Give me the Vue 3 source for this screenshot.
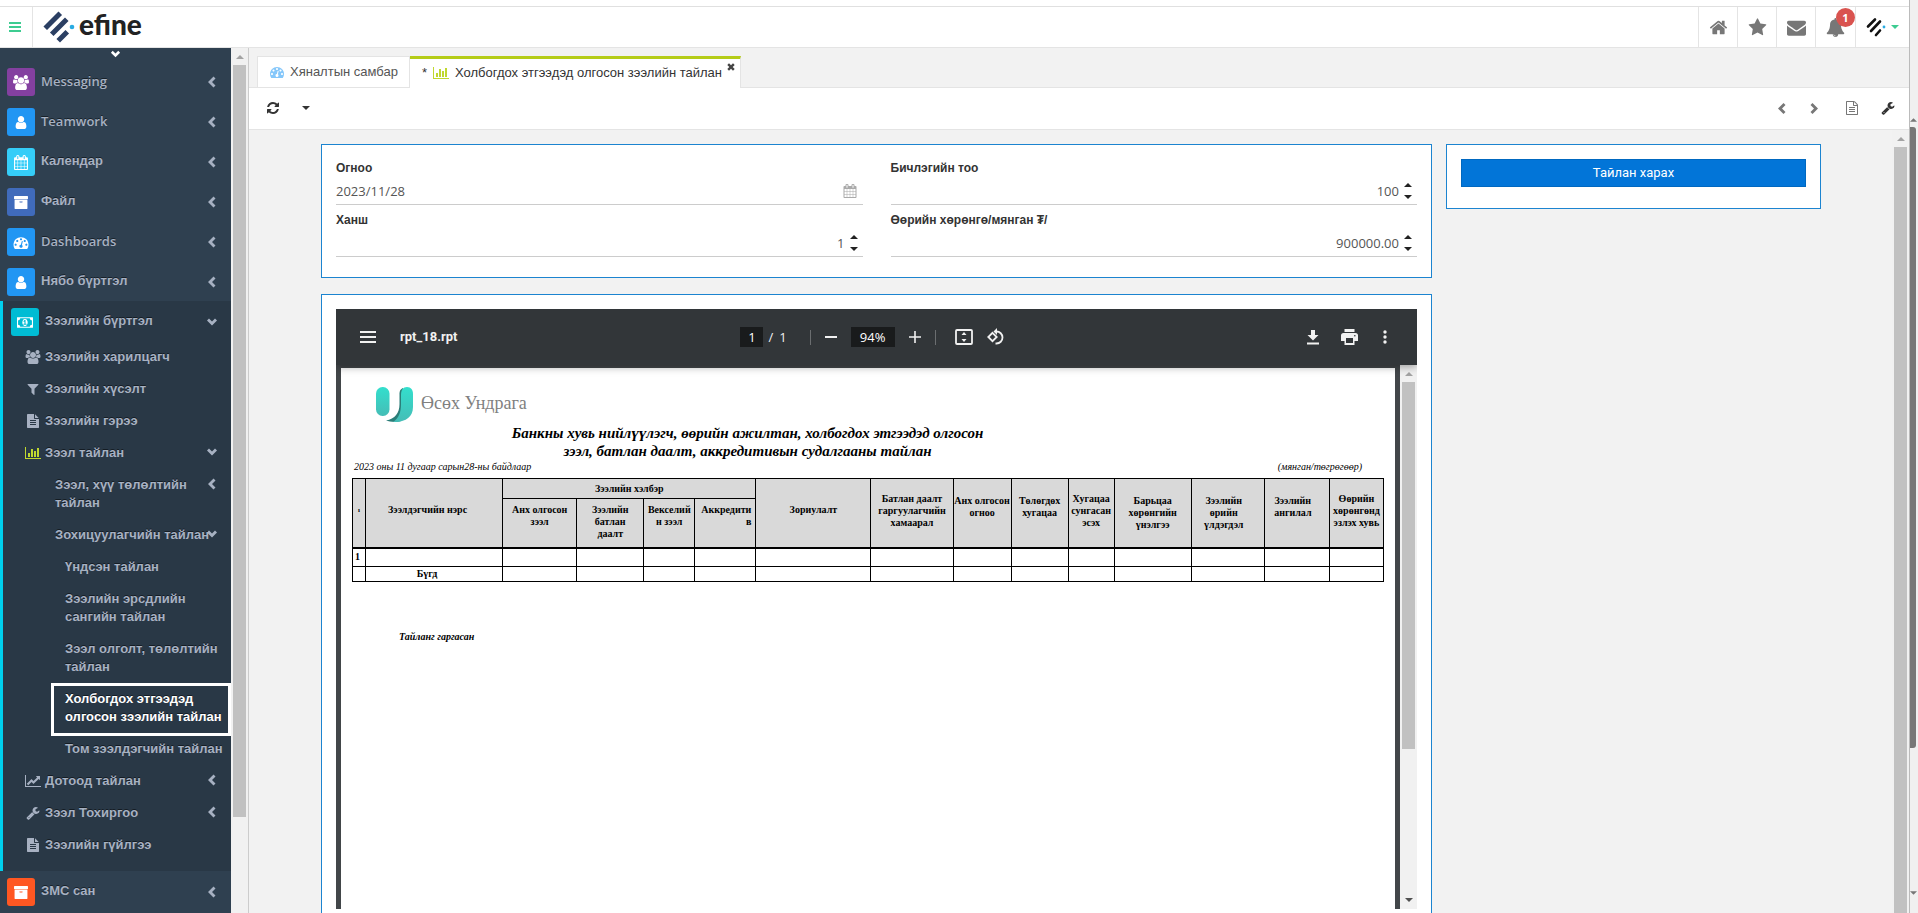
<script setup>
import { h, ref } from 'vue'

const glyphs = {
  home: ['0 0 1792 1792', 'M1472 992v480q0 26-19 45t-45 19h-384v-384h-256v384h-384q-26 0-45-19t-19-45v-480q0-1 .5-3t.5-3l575-474 575 474q1 2 1 6zm223-69l-62 74q-8 9-21 11h-3q-13 0-21-7l-692-577-692 577q-12 8-24 7-13-2-21-11l-62-74q-8-10-7-23.5t11-21.5l719-599q32-26 76-26t76 26l244 204v-195q0-14 9-23t23-9h192q14 0 23 9t9 23v408l219 182q10 8 11 21.5t-7 23.5z'],
  star: ['0 0 1792 1792', 'M1728 647q0 22-26 48l-363 354 86 500q1 7 1 20 0 21-10.5 35.5t-30.5 14.5q-19 0-40-12l-449-236-449 236q-22 12-40 12-21 0-31.5-14.5t-10.5-35.5q0-6 2-20l86-500-364-354q-25-27-25-48 0-37 56-46l502-73 225-455q19-41 49-41t49 41l225 455 502 73q56 9 56 46z'],
  mail: ['0 0 1792 1792', 'M1792 710v794q0 66-47 113t-113 47h-1472q-66 0-113-47t-47-113v-794q44 49 101 87 362 246 497 345 57 42 92.5 65.5t94.5 48 110 24.5h2q51 0 110-24.5t94.5-48 92.5-65.5q170-123 498-345 57-39 100-87zm0-294q0 79-49 151t-122 123q-376 261-468 325-10 7-42.5 31t-54 38.5-52 32.5-57.5 27-50 9h-2q-23 0-50-9t-57.5-27-52-32.5-54-38.5-42.5-31q-91-64-262-182.5t-205-142.5q-62-42-117-115.5t-55-136.5q0-78 41.5-130t118.5-52h1472q65 0 112.5 47t47.5 113z'],
  bell: ['0 0 1792 1792', 'M912 1696q0-16-16-16-59 0-101.5-42.5t-42.5-101.5q0-16-16-16t-16 16q0 73 51.5 124.5t124.5 51.5q16 0 16-16zm816-288q0 52-38 90t-90 38h-448q0 106-75 181t-181 75-181-75-75-181h-448q-52 0-90-38t-38-90q50-42 91-88t85-119.5 74.5-158.5 50-206 19.5-260q0-152 117-282.5t307-158.5q-8-19-8-39 0-40 28-68t68-28 68 28 28 68q0 20-8 39 190 28 307 158.5t117 282.5q0 139 19.5 260t50 206 74.5 158.5 85 119.5 91 88z'],
  refresh: ['0 0 1792 1792', 'M1639 1056q0 5-1 7-64 268-268 434.5t-478 166.5q-146 0-282.5-55t-243.5-157l-129 129q-19 19-45 19t-45-19-19-45v-448q0-26 19-45t45-19h448q26 0 45 19t19 45-19 45l-137 137q71 66 161 102t187 36q134 0 250-65t186-179q11-17 53-117 8-23 30-23h192q13 0 22.5 9.5t9.5 22.5zm25-800v448q0 26-19 45t-45 19h-448q-26 0-45-19t-19-45 19-45l138-138q-148-137-349-137-134 0-250 65t-186 179q-11 17-53 117-8 23-30 23h-199q-13 0-22.5-9.5t-9.5-22.5v-7q65-268 270-434.5t480-166.5q146 0 284 55.5t245 156.5l130-129q19-19 45-19t45 19 19 45z'],
  wrench: ['0 0 1792 1792', 'M448 1472q0-26-19-45t-45-19-45 19-19 45 19 45 45 19 45-19 19-45zm644-420l-682 682q-37 37-90 37-52 0-91-37l-106-108q-38-36-38-90 0-53 38-91l681-681q39 98 114.5 173.5t173.5 114.5zm634-435q0 39-23 106-47 134-164.5 217.5t-258.5 83.5q-185 0-316.5-131.5t-131.5-316.5 131.5-316.5 316.5-131.5q58 0 121.5 16.5t107.5 46.5q16 11 16 28t-16 28l-293 169v224l193 107q5-3 79-48.5t135.5-81 70.5-35.5q15 0 23.5 10t8.5 25z'],
  gauge: ['0 0 1792 1792', 'M384 1152q0-53-37.5-90.5t-90.5-37.5-90.5 37.5-37.5 90.5 37.5 90.5 90.5 37.5 90.5-37.5 37.5-90.5zm192-448q0-53-37.5-90.5t-90.5-37.5-90.5 37.5-37.5 90.5 37.5 90.5 90.5 37.5 90.5-37.5 37.5-90.5zm428 481l101-382q6-26-7.5-48.5t-38.5-29.5-48 6.5-30 39.5l-101 382q-60 5-107 43.5t-63 98.5q-20 77 20 146t117 89 146-20 89-117q16-60-6-117t-72-91zm660-33q0-53-37.5-90.5t-90.5-37.5-90.5 37.5-37.5 90.5 37.5 90.5 90.5 37.5 90.5-37.5 37.5-90.5zm-640-640q0-53-37.5-90.5t-90.5-37.5-90.5 37.5-37.5 90.5 37.5 90.5 90.5 37.5 90.5-37.5 37.5-90.5zm448 192q0-53-37.5-90.5t-90.5-37.5-90.5 37.5-37.5 90.5 37.5 90.5 90.5 37.5 90.5-37.5 37.5-90.5zm320 448q0 261-141 483-19 29-54 29h-1402q-35 0-54-29-141-221-141-483 0-182 71-348t191-286 286-191 348-71 348 71 286 191 191 286 71 348z'],
  bars: ['0 0 2048 1792', 'M640 896v512h-256v-512h256zm384-512v1024h-256v-1024h256zm1024 1152v128h-2048v-1536h128v1408h1920zm-640-896v768h-256v-768h256zm384-384v1152h-256v-1152h256z'],
  line: ['0 0 2048 1792', 'M2048 1536v128h-2048v-1536h128v1408h1920zm-128-1248v435q0 21-19.5 29.5t-35.5-7.5l-121-121-633 633q-10 10-23 10t-23-10l-233-233-416 416-192-192 585-585q10-10 23-10t23 10l233 233 464-464-121-121q-16-16-7.5-35.5t29.5-19.5h435q14 0 23 9t9 23z'],
  user: ['0 0 1792 1792', 'M1536 1399q0 109-62.5 187t-150.5 78h-854q-88 0-150.5-78t-62.5-187q0-85 8.5-160.5t31.5-152 58.5-131 94-89 134.5-34.5q131 128 313 128t313-128q76 0 134.5 34.5t94 89 58.5 131 31.5 152 8.5 160.5zm-256-887q0 159-112.5 271.5t-271.5 112.5-271.5-112.5-112.5-271.5 112.5-271.5 271.5-112.5 271.5 112.5 112.5 271.5z'],
  users: ['-64 0 1920 1792', 'M529 896q-162 5-265 128h-134q-82 0-138-40.5t-56-118.5q0-353 124-353 6 0 43.5 21t97.5 42.5 119 21.5q67 0 133-23-5 37-5 66 0 139 81 256zm1071 637q0 120-73 189.5t-194 69.5h-874q-121 0-194-69.5t-73-189.5q0-53 3.5-103.5t14-109 26.5-108.5 43-97.5 62-81 85.5-53.5 111.5-20q10 0 43 21.5t73 48 107 48 135 21.5 135-21.5 107-48 73-48 43-21.5q61 0 111.5 20t85.5 53.5 62 81 43 97.5 26.5 108.5 14 109 3.5 103.5zm-1024-1277q0 106-75 181t-181 75-181-75-75-181 75-181 181-75 181 75 75 181zm704 384q0 159-112.5 271.5t-271.5 112.5-271.5-112.5-112.5-271.5 112.5-271.5 271.5-112.5 271.5 112.5 112.5 271.5zm576 225q0 78-56 118.5t-138 40.5h-134q-103-123-265-128 81-117 81-256 0-29-5-66 66 23 133 23 59 0 119-21.5t97.5-42.5 43.5-21q124 0 124 353zm-128-609q0 106-75 181t-181 75-181-75-75-181 75-181 181-75 181 75 75 181z'],
  calendar: ['0 0 1792 1792', 'M192 1664h288v-288h-288v288zm352 0h320v-288h-320v288zm-352-352h288v-320h-288v320zm352 0h320v-320h-320v320zm-352-384h288v-288h-288v288zm736 736h320v-288h-320v288zm-384-736h320v-288h-320v288zm768 736h288v-288h-288v288zm-384-352h320v-320h-320v320zm-352-864v-288q0-13-9.5-22.5t-22.5-9.5h-64q-13 0-22.5 9.5t-9.5 22.5v288q0 13 9.5 22.5t22.5 9.5h64q13 0 22.5-9.5t9.5-22.5zm736 864h288v-320h-288v320zm-384-384h320v-288h-320v288zm384 0h288v-288h-288v288zm32-480v-288q0-13-9.5-22.5t-22.5-9.5h-64q-13 0-22.5 9.5t-9.5 22.5v288q0 13 9.5 22.5t22.5 9.5h64q13 0 22.5-9.5t9.5-22.5zm384-64v1280q0 52-38 90t-90 38h-1408q-52 0-90-38t-38-90v-1280q0-52 38-90t90-38h128v-96q0-66 47-113t113-47h64q66 0 113 47t47 113v96h384v-96q0-66 47-113t113-47h64q66 0 113 47t47 113v96h128q52 0 90 38t38 90z'],
  archive: ['0 0 1792 1792', 'M1088 832q0-26-19-45t-45-19h-256q-26 0-45 19t-19 45 19 45 45 19h256q26 0 45-19t19-45zm576-192v960q0 26-19 45t-45 19h-1408q-26 0-45-19t-19-45v-960q0-26 19-45t45-19h1408q26 0 45 19t19 45zm64-448v256q0 26-19 45t-45 19h-1536q-26 0-45-19t-19-45v-256q0-26 19-45t45-19h1536q26 0 45 19t19 45z'],
  doc: ['0 0 1792 1792', 'M1596 476q14 14 28 36h-472v-472q22 14 36 28zm-476 164h544v1056q0 40-28 68t-68 28h-1344q-40 0-68-28t-28-68v-1600q0-40 28-68t68-28h800v544q0 40 28 68t68 28zm160 736v-64q0-14-9-23t-23-9h-704q-14 0-23 9t-9 23v64q0 14 9 23t23 9h704q14 0 23-9t9-23zm0-256v-64q0-14-9-23t-23-9h-704q-14 0-23 9t-9 23v64q0 14 9 23t23 9h704q14 0 23-9t9-23zm0-256v-64q0-14-9-23t-23-9h-704q-14 0-23 9t-9 23v64q0 14 9 23t23 9h704q14 0 23-9t9-23z'],
  docOutline: ['0 0 1792 1792', 'M1596 380q28 28 48 76t20 88v1152q0 40-28 68t-68 28h-1344q-40 0-68-28t-28-68v-1600q0-40 28-68t68-28h896q40 0 88 20t76 48zm-444-244v376h376q-10-29-22-41l-313-313q-12-12-41-22zm384 1528v-1024h-416q-40 0-68-28t-28-68v-416h-768v1536h1280zm-1024-864q0-14 9-23t23-9h704q14 0 23 9t9 23v64q0 14-9 23t-23 9h-704q-14 0-23-9t-9-23v-64zm736 224q14 0 23 9t9 23v64q0 14-9 23t-23 9h-704q-14 0-23-9t-9-23v-64q0-14 9-23t23-9h704zm0 256q14 0 23 9t9 23v64q0 14-9 23t-23 9h-704q-14 0-23-9t-9-23v-64q0-14 9-23t23-9h704z'],
  filter: ['192 0 1408 1792', 'M1595 295q17 41-14 70l-493 493v742q0 42-39 59-13 5-25 5-27 0-45-19l-256-256q-19-19-19-45v-486l-493-493q-31-29-14-70 17-39 59-39h1280q42 0 59 39z'],
  money: ['0 0 1920 1792', 'M768 1152h384v-96h-128v-448h-114l-148 137 77 80q42-37 55-57h2v288h-128v96zm512-256q0 70-21 142t-59.5 134-101.5 101-138 39-138-39-101.5-101-59.5-134-21-142 21-142 59.5-134 101.5-101 138-39 138 39 101.5 101 59.5 134 21 142zm512 256v-512q-106 0-181-75t-75-181h-1152q0 106-75 181t-181 75v512q106 0 181 75t75 181h1152q0-106 75-181t181-75zm128-832v1152q0 26-19 45t-45 19h-1792q-26 0-45-19t-19-45v-1152q0-26 19-45t45-19h1792q26 0 45 19t19 45z'],
  left: ['0 0 10 12', 'M6.5 0.5L8.5 2.5 5 6 8.5 9.5 6.5 11.5 1 6z'],
  right: ['0 0 10 12', 'M3.5 0.5L1.5 2.5 5 6 1.5 9.5 3.5 11.5 9 6z'],
  down: ['0 0 12 12', 'M1 4.5L3 2.5 6 5.5 9 2.5 11 4.5 6 9.5z'],
  caret: ['0 0 8 4', 'M0 0h8l-4 4z'],
  caretUp: ['0 0 8 4', 'M0 4h8l-4-4z'],
  close: ['0 0 8 8', 'M0.3 2L2 0.3 4 2.3 6 0.3 7.7 2 5.7 4 7.7 6 6 7.7 4 5.7 2 7.7 0.3 6 2.3 4z'],
}

const Icon = (props) =>
  h('svg', { viewBox: glyphs[props.name][0], 'aria-hidden': 'true' }, [
    h('path', { d: glyphs[props.name][1], fill: 'currentColor' }),
  ])
Icon.props = ['name']

const modules = [
  { label: 'Messaging', icon: 'users', tone: 'purple', latin: true },
  { label: 'Teamwork', icon: 'user', tone: 'blue', latin: true },
  { label: 'Календар', icon: 'calendar', tone: 'sky' },
  { label: 'Файл', icon: 'archive', tone: 'indigo' },
  { label: 'Dashboards', icon: 'gauge', tone: 'blue', latin: true },
  { label: 'Нябо бүртгэл', icon: 'user', tone: 'blue' },
]

const submenu = [
  { label: 'Зээлийн харилцагч', icon: 'users', level: 1 },
  { label: 'Зээлийн хүсэлт', icon: 'filter', level: 1 },
  { label: 'Зээлийн гэрээ', icon: 'doc', level: 1 },
  { label: 'Зээл тайлан', icon: 'bars', level: 1, arrow: 'down', lime: true },
  { label: 'Зээл, хүү төлөлтийн\nтайлан', level: 2, arrow: 'left' },
  { label: 'Зохицуулагчийн тайлан', level: 2, arrow: 'down' },
  { label: 'Үндсэн тайлан', level: 3 },
  { label: 'Зээлийн эрсдлийн\nсангийн тайлан', level: 3 },
  { label: 'Зээл олголт, төлөлтийн\nтайлан', level: 3 },
  { label: 'Холбогдох этгээдэд\nолгосон зээлийн тайлан', level: 3, current: true },
  { label: 'Том зээлдэгчийн тайлан', level: 3 },
  { label: 'Дотоод тайлан', icon: 'line', level: 1, arrow: 'left' },
  { label: 'Зээл Тохиргоо', icon: 'wrench', level: 1, arrow: 'left' },
  { label: 'Зээлийн гүйлгээ', icon: 'doc', level: 1 },
]

const fields = [
  { id: 'date', label: 'Огноо', value: ref('2023/11/28'), date: true },
  { id: 'count', label: 'Бичлэгийн тоо', value: ref('100') },
  { id: 'rate', label: 'Ханш', value: ref('1') },
  { id: 'capital', label: 'Өөрийн хөрөнгө/мянган ₮/', value: ref('900000.00') },
]

const columns = [13, 137, 74, 67, 51, 61, 115, 82, 58, 57, 46, 77, 73, 65, 54]
const total = columns.reduce((sum, width) => sum + width, 0)
</script>

<template>
  <div class="shell">
    <div class="app">
      <header class="topbar">
        <button class="burger" aria-label="Цэс"><i></i><i></i><i></i></button>
        <a class="brand" href="#">
          <svg class="brand-mark" viewBox="0 0 32 32" aria-hidden="true">
            <g stroke="#2b3f63" stroke-width="5" stroke-linecap="square">
              <path d="M4 15.500L15.500 4M10.500 21.500L22 10M17 28L22.500 22.500" />
            </g>
            <circle cx="29" cy="16" r="2.300" fill="#29abe2" />
          </svg>
          <span>efine</span>
        </a>
        <nav class="quick">
          <button aria-label="Нүүр"><Icon name="home" class="q-icon" /></button>
          <button aria-label="Дуртай"><Icon name="star" class="q-icon" /></button>
          <button aria-label="Шуудан"><Icon name="mail" class="q-icon" /></button>
          <button class="bell" aria-label="Мэдэгдэл"><Icon name="bell" class="q-icon" /><span class="badge">1</span></button>
          <button class="profile" aria-label="Хэрэглэгч">
            <svg class="profile-mark" viewBox="0 0 20 20" aria-hidden="true">
              <path d="M2 9.500L9 2.500M5 14L14 4.500M10 18L14 13.500" stroke="#111" stroke-width="2.600" stroke-linecap="round" />
              <circle cx="18" cy="10" r="1.400" fill="#29abe2" />
            </svg>
            <Icon name="caret" class="profile-caret" />
          </button>
        </nav>
      </header>

      <div class="body">
        <nav class="sidebar">
          <button class="more" aria-label="Дэлгэх"><Icon name="down" class="arrow" /></button>
          <a v-for="m in modules" :key="m.label" class="module" href="#">
            <span class="tile" :class="m.tone"><Icon :name="m.icon" class="tile-icon" /></span>
            <span class="name" :class="{ latin: m.latin }">{{ m.label }}</span>
            <Icon name="left" class="arrow" />
          </a>
          <div class="open">
            <a class="module" href="#">
              <span class="tile cyan"><Icon name="money" class="tile-icon" /></span>
              <span class="name">Зээлийн бүртгэл</span>
              <Icon name="down" class="arrow" />
            </a>
            <a v-for="s in submenu" :key="s.label" class="sub" :class="['level' + s.level, { current: s.current }]" href="#">
              <Icon v-if="s.icon" :name="s.icon" class="sub-icon" :class="{ lime: s.lime }" />
              <span class="name">{{ s.label }}</span>
              <Icon v-if="s.arrow" :name="s.arrow" class="arrow" />
            </a>
          </div>
          <a class="module" href="#">
            <span class="tile orange"><Icon name="archive" class="tile-icon" /></span>
            <span class="name">ЗМС сан</span>
            <Icon name="left" class="arrow" />
          </a>
        </nav>
        <div class="rail side-rail"><Icon name="caretUp" class="rail-arrow" /><i class="side-thumb"></i></div>

        <main class="main">
          <div class="tabs">
            <a class="tab" href="#"><Icon name="gauge" class="tab-icon sky-text" />Хяналтын самбар</a>
            <a class="tab active" href="#"><span class="star">*</span><Icon name="bars" class="tab-icon wide lime" />Холбогдох этгээдэд олгосон зээлийн тайлан<Icon name="close" class="close" /></a>
          </div>
          <div class="tools">
            <button aria-label="Сэргээх"><Icon name="refresh" class="tool-icon" /></button>
            <button class="menu-tool" aria-label="Сонголт"><Icon name="caret" class="tool-caret" /></button>
            <span class="spacer"></span>
            <button class="gray" aria-label="Өмнөх"><Icon name="left" class="step" /></button>
            <button class="gray" aria-label="Дараах"><Icon name="right" class="step" /></button>
            <button class="gray doc-tool" aria-label="Баримт"><Icon name="docOutline" class="tool-icon" /></button>
            <button aria-label="Тохиргоо"><Icon name="wrench" class="tool-icon" /></button>
          </div>

          <div class="scroller">
            <div class="content">
              <div class="left-col">
                <form class="panel filters" @submit.prevent>
                  <div v-for="f in fields" :key="f.id" class="field">
                    <label :for="f.id">{{ f.label }}</label>
                    <div class="control">
                      <input :id="f.id" v-model="f.value.value" type="text" :class="{ number: !f.date }" />
                      <Icon v-if="f.date" name="calendar" class="cal" />
                      <span v-else class="spin">
                        <button type="button" aria-label="Нэмэх"><Icon name="caretUp" /></button>
                        <button type="button" aria-label="Хасах"><Icon name="caret" /></button>
                      </span>
                    </div>
                  </div>
                </form>

                <section class="panel report">
                  <div class="viewer">
                    <div class="pdf-bar">
                      <div class="pdf-left">
                        <button class="pdf-menu" aria-label="Цэс"><i></i><i></i><i></i></button>
                        <span>rpt_18.rpt</span>
                      </div>
                      <div class="pdf-mid">
                        <input class="page-no" aria-label="Хуудас" value="1" />
                        <span class="slash">/</span><span class="pages">1</span>
                        <i class="rule"></i>
                        <button aria-label="Багасгах"><svg class="sign" viewBox="0 0 12 12"><path d="M0 6h12" stroke="currentColor" stroke-width="2" /></svg></button>
                        <input class="zoom-level" aria-label="Томруулалт" value="94%" />
                        <button aria-label="Томруулах"><svg class="sign" viewBox="0 0 12 12"><path d="M0 6h12M6 0v12" stroke="currentColor" stroke-width="1.600" /></svg></button>
                        <i class="rule"></i>
                        <button class="fit" aria-label="Тааруулах"><svg viewBox="0 0 18 16"><rect x="1" y="1" width="16" height="14" rx="1" fill="none" stroke="currentColor" stroke-width="1.800" /><path d="M9 3l2.500 3h-5zM9 13l2.500-3h-5z" fill="currentColor" /></svg></button>
                        <button class="turn" aria-label="Эргүүлэх"><svg viewBox="0 0 18 18"><path d="M5.500 4.800L9.700 9l-4.200 4.200L1.300 9z" fill="none" stroke="currentColor" stroke-width="1.800" /><path d="M8 3.500h1.500a6 6 0 0 1 0 12H8.500" fill="none" stroke="currentColor" stroke-width="1.800" /><path d="M10 0v7L6.500 3.500z" fill="currentColor" /></svg></button>
                      </div>
                      <div class="pdf-right">
                        <button aria-label="Татах"><svg viewBox="0 0 12 15"><path d="M4 0h4v5h3.500L6 10.500.500 5H4zM0 12.500h12v2H0z" fill="currentColor" /></svg></button>
                        <button class="print" aria-label="Хэвлэх"><svg viewBox="0 0 17 16"><path d="M3.500 0h10v3h-10zM2.500 4h12A2.500 2.500 0 0 1 17 6.500V12h-3.500v4h-10v-4H0V6.500A2.500 2.500 0 0 1 2.500 4zM5 9v5h7V9zM13.800 6a.8.8 0 1 0 .1 1.600.8.8 0 0 0-.1-1.600z" fill="currentColor" fill-rule="evenodd" /></svg></button>
                        <button class="dots" aria-label="Бусад"><svg viewBox="0 0 4 14"><circle cx="2" cy="2" r="1.700" fill="currentColor" /><circle cx="2" cy="7" r="1.700" fill="currentColor" /><circle cx="2" cy="12" r="1.700" fill="currentColor" /></svg></button>
                      </div>
                    </div>
                    <div class="pdf-body">
                      <article class="page">
                        <div class="org">
                          <svg class="org-mark" viewBox="0 0 37 35" aria-hidden="true">
                            <defs>
                              <linearGradient id="teal" x1="0" y1="0" x2="0" y2="1">
                                <stop offset="0" stop-color="#33dfcd" /><stop offset="1" stop-color="#45bdb6" />
                              </linearGradient>
                            </defs>
                            <rect width="13.500" height="29" rx="6.500" fill="url(#teal)" />
                            <path d="M27 1C24 2.500 23.500 4 23.500 8V17C23.500 26 19 32 10 33.500 14 35 20 35.500 25 34z" fill="#2b7d78" />
                            <path d="M25 8C25 3 27 0 31 0s6 3 6 7v13C37 31 28 35.500 17 35 23 31 25 25 25 17z" fill="url(#teal)" />
                          </svg>
                          <span>Өсөх Ундрага</span>
                        </div>
                        <h1>Банкны хувь нийлүүлэгч, өөрийн ажилтан, холбогдох этгээдэд олгосон<br />зээл, батлан даалт, аккредитивын судалгааны тайлан</h1>
                        <div class="meta">
                          <span>2023 оны 11 дугаар сарын28-ны байдлаар</span>
                          <span>(мянган/төгрөгөөр)</span>
                        </div>
                        <table>
                          <colgroup>
                            <col v-for="(w, i) in columns" :key="i" :style="{ width: (w / total) * 100 + '%' }" />
                          </colgroup>
                          <thead>
                            <tr class="group">
                              <th rowspan="2" class="single tiny">ı</th>
                              <th rowspan="2" class="single client">Зээлдэгчийн нэрс</th>
                              <th colspan="4" class="center">Зээлийн хэлбэр</th>
                              <th rowspan="2" class="single">Зориулалт</th>
                              <th rowspan="2" class="high">Батлан даалт<br />гаргуулагчийн<br />хамаарал</th>
                              <th rowspan="2">Анх олгосон<br />огноо</th>
                              <th rowspan="2">Төлөгдөх<br />хугацаа</th>
                              <th rowspan="2" class="high">Хугацаа<br />сунгасан<br />эсэх</th>
                              <th rowspan="2">Барьцаа<br />хөрөнгийн<br />үнэлгээ</th>
                              <th rowspan="2" class="inset">Зээлийн<br />өрийн<br />үлдэгдэл</th>
                              <th rowspan="2" class="inset">Зээлийн<br />ангилал</th>
                              <th rowspan="2" class="high">Өөрийн<br />хөрөнгөнд<br />эзлэх хувь</th>
                            </tr>
                            <tr class="kinds">
                              <th>Анх олгосон<br />зээл</th>
                              <th>Зээлийн<br />батлан<br />даалт</th>
                              <th>Векселий<br />н зээл</th>
                              <th class="end">Аккредити<br />в</th>
                            </tr>
                          </thead>
                          <tbody>
                            <tr class="entry"><td>1</td><td v-for="n in 14" :key="n"></td></tr>
                            <tr class="sum"><td></td><td>Бүгд</td><td v-for="n in 13" :key="n"></td></tr>
                          </tbody>
                        </table>
                        <p class="signed">Тайланг гаргасан</p>
                      </article>
                      <div class="rail pdf-rail"><Icon name="caretUp" class="rail-arrow" /><i class="pdf-thumb"></i><Icon name="caret" class="rail-arrow dark" /></div>
                    </div>
                  </div>
                </section>
              </div>

              <section class="panel action"><button class="run">Тайлан харах</button></section>
            </div>
            <div class="rail"><Icon name="caretUp" class="rail-arrow" /><i class="main-thumb"></i></div>
          </div>
        </main>
      </div>
    </div>
    <div class="edge"><Icon name="caretUp" class="edge-arrow" /><i></i><Icon name="caret" class="edge-arrow" /></div>
  </div>
</template>

<style>
body { margin: 0; overflow: hidden; }
</style>

<style scoped>
* { box-sizing: border-box; }
button { padding: 0; border: 0; background: none; color: inherit; font: inherit; cursor: pointer; }
a { color: inherit; text-decoration: none; }
svg { display: block; flex: none; }
.shell { display: flex; height: 100vh; overflow: hidden; background: #fff; font-family: "Open Sans", "Noto Sans", sans-serif; font-size: 13px; color: #333; }
.app { flex: 1; min-width: 0; display: flex; flex-direction: column; }

/* Top bar */
.topbar { flex: none; display: flex; height: 42px; margin-top: 6px; border-top: 1px solid #e0e0e0; border-bottom: 1px solid #e4e4e4; }
.burger { width: 33px; padding: 0 0 0 9px; border-right: 1px solid #e4e4e4; display: flex; flex-direction: column; justify-content: center; gap: 2px; }
.burger i { width: 12px; height: 2px; background: #3dcc91; }
.brand { display: flex; align-items: center; gap: 4px; padding-left: 10px; font: 900 28px/34px Lato, sans-serif; color: #222; }
.brand span { padding-bottom: 6px; }
.brand-mark { width: 32px; height: 32px; }
.quick { display: flex; margin-left: auto; color: #777; }
.quick button { width: 39px; display: flex; align-items: center; justify-content: center; border-left: 1px solid #e4e4e4; }
.q-icon { width: 19px; height: 19px; }
.quick .bell { position: relative; width: 40px; }
.badge { position: absolute; top: 1px; left: 20px; width: 19px; height: 19px; border-radius: 10px; background: #d9534f; color: #fff; font: 700 11px/19px "Open Sans", sans-serif; text-align: center; }
.quick .profile { width: 54px; gap: 5px; }
.profile-mark { width: 20px; height: 20px; }
.profile-caret { width: 8px; height: 4px; color: #3dcc91; }

/* Sidebar */
.body { flex: 1; min-height: 0; display: flex; }
.sidebar { flex: none; width: 231px; overflow: hidden; background: #2f4050; color: #a7b1c2; font: 700 13px/18px "Liberation Sans", Arial, sans-serif; text-shadow: 0 -1px 0 rgba(0, 0, 0, 0.5); }
.more { display: flex; width: 100%; height: 13px; justify-content: center; color: #fff; }
.module { display: flex; align-items: center; height: 40px; padding: 2px 14px 0 7px; }
.module .name { padding-bottom: 2px; }
.module .arrow { margin-bottom: 1px; }
.tile { width: 28px; height: 28px; margin-right: 6px; border-radius: 3px; display: flex; align-items: center; justify-content: center; color: #fff; }
.tile-icon { width: 16px; height: 15px; }
.purple { background: #8440a0; }
.blue { background: #2196f3; }
.sky { background: #35cdf8; }
.indigo { background: #406bbb; }
.cyan { background: #00bcd4; }
.orange { background: #ff5722; }
.name { flex: 1; min-width: 0; white-space: pre; }
.name.latin { font: 600 13px/18px "Open Sans", sans-serif; }
.arrow { width: 12px; height: 12px; margin-right: -1px; }
.more .arrow { width: 11px; margin: 0; }
.open { padding-bottom: 10px; border-left: 3px solid #00d0ee; background: #293846; }
.open .module { padding-left: 8px; }
.sub { position: relative; display: flex; align-items: flex-start; padding: 7px 14px 7px 22px; }
.sub .arrow { margin-top: 2px; }
.level2 { padding-left: 52px; }
.level3 { padding-left: 62px; }
.sub-icon { width: 16px; height: 14px; margin: 2px 4px 0 0; }
.lime { color: #c0d82f; }
.current { color: #fff; }
.current::after { content: ""; position: absolute; top: 0; bottom: -3px; left: 48px; right: 0; border: 3px solid #fff; }

/* Scroll rails */
.rail { flex: none; width: 17px; background: #f1f1f1; display: flex; flex-direction: column; align-items: center; }
.rail-arrow { width: 8px; height: 4px; margin: 7px 0 6px; color: #a3a3a3; }
.rail i { width: 13px; background: #c1c1c1; }
.side-thumb { height: 752px; }
.main-thumb { flex: 1; }

/* Main */
.main { flex: 1; min-width: 0; display: flex; flex-direction: column; border-left: 1px solid #ccc; background: #f2f2f2; }
.tabs { flex: none; display: flex; height: 40px; padding: 8px 0 0 8px; border-bottom: 1px solid #e4e4e4; }
.tab { position: relative; display: flex; align-items: center; height: 31px; padding: 0 11px 0 12px; border: 1px solid #e4e4e4; border-bottom: 0; background: #fff; color: #555; font: 13px/18px "Liberation Sans", Arial, sans-serif; }
.tab.active { height: 32px; padding: 0 18px 2px 12px; border-top: 3px solid #b5cc18; border-left: 0; color: #333; }
.tab-icon { width: 14px; height: 14px; margin-right: 6px; }
.wide { width: 16px; }
.star { margin-right: 6px; }
.sky-text { color: #85c7fa; }
.close { position: absolute; top: 4px; right: 5px; width: 8px; height: 8px; color: #444; }
.tools { flex: none; display: flex; align-items: center; height: 42px; padding: 0 13px 1px 16px; border-bottom: 1px solid #e4e4e4; background: #fff; }
.tools button { display: flex; align-items: center; justify-content: center; width: 16px; height: 32px; }
.tools button + button { margin-left: 20px; }
.tools button.menu-tool { margin-left: 17px; }
.tool-icon { width: 14px; height: 14px; }
.tool-caret { width: 8px; height: 4px; }
.spacer { flex: 1; }
.gray { color: #777; }
.tools .step { width: 10px; height: 13px; }
.tools button.gray + button.gray { margin-left: 16px; }
.tools button.gray + button.doc-tool { margin-left: 22px; }
.scroller { flex: 1; min-height: 0; display: flex; }
.content { flex: 1; min-width: 0; display: grid; grid-template-columns: minmax(0, 1111fr) minmax(0, 375fr); gap: 14px; align-items: start; padding: 14px 71px 0 72px; overflow: hidden; }
.left-col { display: flex; flex-direction: column; gap: 16px; }
.panel { border: 1px solid #1c84d0; background: #fff; }
.filters { display: grid; grid-template-columns: 1fr 1fr; gap: 0 28px; padding: 12px 14px 16px; }
label { display: block; padding: 2px 0; font: 700 12px/18px "Liberation Sans", Arial, sans-serif; color: #333; }
.control { display: flex; align-items: center; height: 26px; margin-bottom: 4px; padding-bottom: 2px; border-bottom: 1px solid #ccc; }
.control input { flex: 1; min-width: 0; padding: 0; border: 0; outline: 0; background: none; color: #555; font: 13px/18px "Open Sans", sans-serif; }
.control .number { text-align: right; }
.cal { width: 14px; height: 14px; margin-right: 6px; color: #aaa; }
.spin { display: flex; flex-direction: column; gap: 8px; margin: 0 5px; color: #222; }
.spin svg { width: 8px; height: 4px; }
.action { padding: 14px 14px 21px; }
.run { display: block; width: 100%; height: 28px; border: 1px solid #0068c0; background: #0275d8; color: #fff; font: 13px/18px Roboto, sans-serif; }

/* Document viewer */
.report { padding: 14px; }
.viewer { display: flex; flex-direction: column; height: 600px; overflow: hidden; background: #424649; }
.pdf-bar { position: relative; flex: none; display: flex; align-items: center; height: 56px; background: #323639; color: #f1f1f1; box-shadow: 0 2px 8px rgba(0, 0, 0, 0.35); font: 13px/20px "Open Sans", sans-serif; }
.pdf-left, .pdf-right { flex: 1; display: flex; align-items: center; }
.pdf-left { padding-left: 24px; gap: 24px; font: 700 13px/20px Roboto, sans-serif; }
.pdf-menu { display: flex; flex-direction: column; gap: 3px; }
.pdf-menu i { width: 16px; height: 2px; background: #f1f1f1; }
.pdf-mid { display: flex; align-items: center; padding-right: 2px; }
.pdf-mid input { height: 20px; padding: 0; border: 0; background: #191b1c; color: #fff; font: inherit; text-align: center; }
.page-no { width: 23px; }
.slash { margin: 0 6px 0 5px; }
.pages { margin-right: 23px; }
.rule { width: 1px; height: 15px; background: #6b6e70; }
.pdf-mid button { margin: 0 14px; }
.sign { width: 12px; height: 12px; }
.zoom-level { width: 44px; }
.pdf-mid .fit { width: 18px; margin: 0 14px 0 19px; }
.pdf-mid .turn { width: 18px; margin: 0; }
.pdf-right { justify-content: flex-end; gap: 22px; padding-right: 30px; }
.pdf-right button { width: 12px; }
.pdf-right .print { width: 17px; }
.pdf-right .dots { width: 4px; margin-left: 3px; }
.pdf-body { flex: 1; min-height: 0; display: flex; padding-left: 5px; }
.page { flex: 1; min-width: 0; margin: 3px 5px 0 0; padding: 19px 11px 0; background: #fff; color: #000; font-family: "Liberation Serif", "Times New Roman", serif; }
.org { display: flex; align-items: center; gap: 8px; height: 35px; margin-left: 24px; font-size: 18px; line-height: 32px; color: #808080; }
.org span { padding-bottom: 3px; }
.org-mark { width: 37px; height: 35px; }
h1 { margin: 2px 0 0; padding-right: 293px; padding-left: 52px; text-align: center; white-space: nowrap; font: italic 700 15px/18px "Liberation Serif", serif; }
.meta { display: flex; justify-content: space-between; height: 18px; padding: 0 22px 0 2px; font: italic 10px/14px "Liberation Serif", serif; }
table { width: 100%; table-layout: fixed; border-collapse: collapse; font: 700 10px/12px "Liberation Serif", serif; }
th, td { padding: 0; border: 1px solid #000; text-align: center; white-space: nowrap; }
th { padding-top: 16px; background: #d9d9d9; vertical-align: top; }
th.single { padding-top: 25px; }
th.high { padding-top: 14px; }
th.center { padding-top: 4px; }
th.end { padding-right: 4px; text-align: right; }
th.client { padding-right: 13px; }
th.inset { padding-right: 8px; }
th.tiny { font-size: 7px; }
.group { height: 20px; }
.kinds { height: 49px; }
.kinds th { padding-top: 5px; }
tbody tr:first-child td { border-top: 2px solid #000; }
.entry { height: 19px; }
.sum { height: 15px; }
.entry td:first-child { padding-right: 3px; }
.sum td:nth-child(2) { padding-right: 14px; }
.signed { margin: 48px 0 0 47px; font: italic 700 10px/14px "Liberation Serif", serif; }
.pdf-thumb { height: 367px; }
.rail-arrow.dark { margin: auto 0 7px; color: #505050; }

/* Window edge */
.edge { flex: none; width: 9px; display: flex; flex-direction: column; padding: 117px 0 17px; border-left: 1px solid #bbb; background: #f0f0f0; color: #777; }
.edge i { width: 6px; height: 621px; margin-top: 4px; border-radius: 0 3px 3px 0; background: #777; }
.edge-arrow { width: 7px; height: 6px; }
.edge-arrow:last-child { margin-top: auto; }
</style>
